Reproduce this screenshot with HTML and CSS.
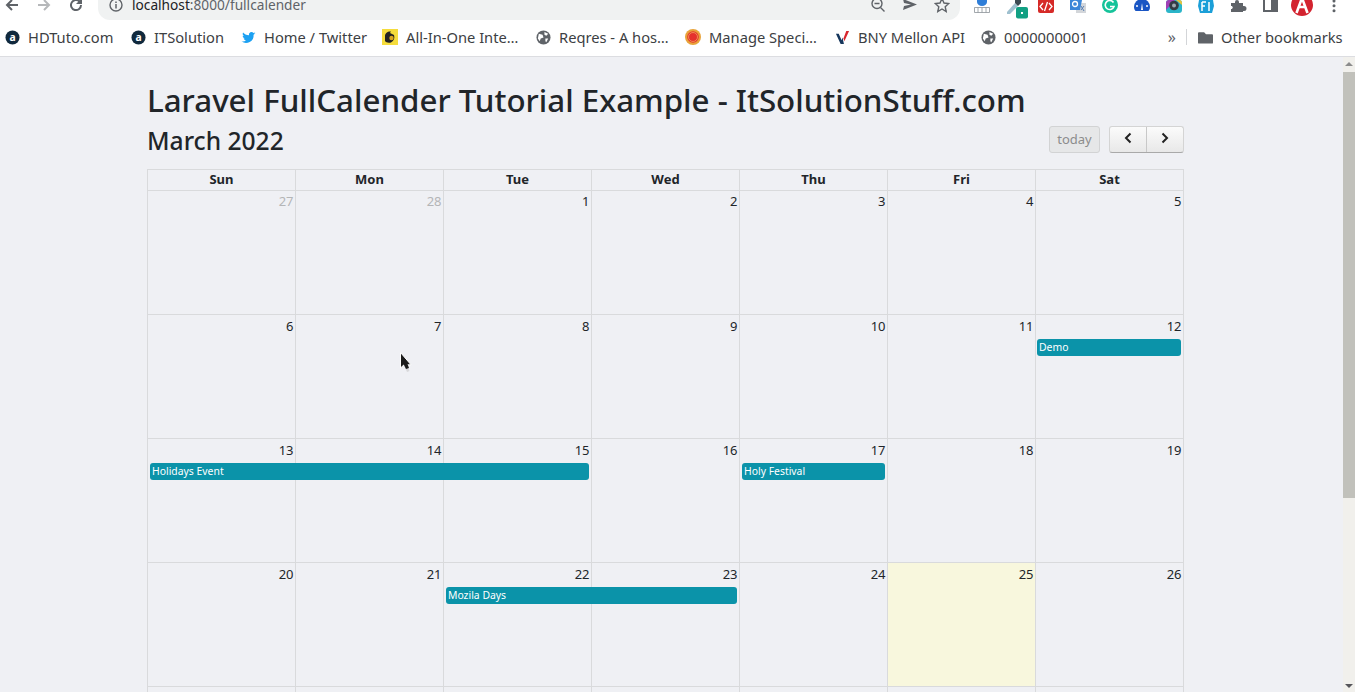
FILE: index.html
```html
<!DOCTYPE html>
<html lang="en">
<head>
    <meta charset="UTF-8">
    <meta name="viewport" content="width=device-width, initial-scale=1.0">
    <title>Laravel FullCalender Tutorial Example</title>
    <link rel="stylesheet" href="styles.css">
</head>
<body>
    <!-- Browser toolbar -->
    <header class="browser">
        <div class="toolbar">
            <div class="nav-icons">
                <svg class="nav-icon" viewBox="0 0 16 16"><path d="M14 8H3M8 3 3 8l5 5" fill="none" stroke="#5f6368" stroke-width="2"/></svg>
                <svg class="nav-icon" viewBox="0 0 16 16"><path d="M2 8h11M8 3l5 5-5 5" fill="none" stroke="#b6b8ba" stroke-width="2"/></svg>
                <svg class="nav-icon" viewBox="0 0 16 16"><path d="M13 8a5 5 0 1 1-1.500-3.500" fill="none" stroke="#5f6368" stroke-width="2"/><path d="M14 1v6H8z" fill="#5f6368"/></svg>
            </div>
            <div class="address">
                <svg class="info-icon" viewBox="0 0 14 14"><circle cx="7" cy="7" r="6" fill="none" stroke="#5f6368" stroke-width="1.400"/><path d="M7 6v4.500M7 3.500v1.400" stroke="#5f6368" stroke-width="1.500"/></svg>
                <span class="url">localhost<span class="url-path">:8000/fullcalender</span></span>
                <div class="address-icons">
                    <svg class="addr-icon" viewBox="0 0 16 16"><circle cx="7" cy="6.500" r="5" fill="none" stroke="#5f6368" stroke-width="1.400"/><path d="M4.500 6.500h5M10.500 10.500l4 4" stroke="#5f6368" stroke-width="1.400"/></svg>
                    <svg class="addr-icon" viewBox="0 0 16 16"><path d="M1 2l14 5.500L1 13l1-4 7-1.500L2 6z" fill="#5f6368"/></svg>
                    <svg class="addr-icon" viewBox="0 0 16 16"><path d="M8 1.500l2 4.500 4.800.5-3.600 3.200 1 4.800L8 12l-4.200 2.500 1-4.800L1.200 6.500 6 6z" fill="none" stroke="#5f6368" stroke-width="1.400"/></svg>
                </div>
            </div>
            <div class="extensions">
                <svg class="ext" viewBox="0 0 16 16"><path d="M3 0h10v2a5 4 0 0 1-10 0z" fill="#2f7ed8"/><path d="M.500 7.500h15v5H.500zM4 7.500v5M8 7.500v5M12 7.500v5" fill="none" stroke="#8b9298" stroke-width=".8"/></svg>
                <svg class="ext" viewBox="0 0 16 16"><path d="M1 12 9 3l3 3-8 8H1z" fill="#9fc0cf"/><path d="M9 0h6v3l-3 3-3-3z" fill="#3c4a52"/><rect x="10" y="7" width="12" height="11.500" rx="2" fill="#12a083"/><rect x="15" y="12" width="2" height="2" fill="#fff"/></svg>
                <svg class="ext" viewBox="0 0 16 16"><path d="M0 0h16v11a2 2 0 0 1-2 2H2a2 2 0 0 1-2-2z" fill="#d62a27"/><path d="M5 3 2 6.500 5 10M11 3l3 3.500L11 10M9.500 2 6.500 11" fill="none" stroke="#fff" stroke-width="1.300"/></svg>
                <svg class="ext" viewBox="0 0 16 16"><path d="M0 0h10v10H0z" fill="#3b86d8"/><path d="M6 3h10v10H6z" fill="#d3d6da"/><path d="M6 0h6l-2 10H6z" fill="#3b86d8"/><circle cx="5" cy="4" r="2.500" fill="none" stroke="#fff" stroke-width="1.300"/><path d="M11 6l3 5M14 6l-3 4" stroke="#5a7fb0"/></svg>
                <svg class="ext" viewBox="0 0 16 16"><circle cx="8" cy="5" r="8" fill="#15c39a"/><path d="M11.500 2.500a4.500 4.500 0 1 0 .5 4H8" fill="none" stroke="#fff" stroke-width="1.600"/></svg>
                <svg class="ext" viewBox="0 0 16 16"><path d="M0 7a8 8 0 0 1 16 0c0 2-1 4-2 4H2C1 11 0 9 0 7z" fill="#1a56c4"/><path d="M8 3l-1 7h2z" fill="#fff"/><circle cx="3" cy="6" r="1" fill="#fff"/><circle cx="13" cy="6" r="1" fill="#fff"/></svg>
                <svg class="ext" viewBox="0 0 16 16"><rect width="16" height="13" rx="3" fill="#2bb5c9"/><path d="M0 3a3 3 0 0 1 3-3h6L0 10z" fill="#a13fb5"/><path d="M10 0h3a3 3 0 0 1 3 3v2z" fill="#e8c33a"/><circle cx="8" cy="5.500" r="4.800" fill="#333c44"/><circle cx="8" cy="5.500" r="2" fill="#9ea8b0"/></svg>
                <svg class="ext" viewBox="0 0 16 16"><path d="M1 0h14l1 6-2 7H2L0 6z" fill="#1b9fd8"/><path d="M4 2h4M4 2v9M4 6h3M11 2v9" stroke="#fff" stroke-width="1.500" fill="none"/></svg>
                <svg class="ext" viewBox="0 0 16 16"><path d="M1 3h4V2a2 2 0 0 1 4 0v1h4v3h1a2.500 2.500 0 0 1 0 5h-1v1H1V9h1a2 2 0 0 0 0-3H1z" fill="#5f6368"/></svg>
                <svg class="ext" viewBox="0 0 16 16"><path d="M2 0v11h13V0" fill="none" stroke="#5f6368" stroke-width="2"/><path d="M9 0h6v11H9z" fill="#5f6368"/></svg>
                <svg class="ext" viewBox="0 0 16 16"><circle cx="8" cy="5" r="11" fill="#d3232f"/><path d="M2.500 13 8 -2l5.500 15M5 7h6" fill="none" stroke="#fff" stroke-width="2.600"/></svg>
                <svg class="ext" viewBox="0 0 16 16"><circle cx="8" cy="1" r="1.500" fill="#5f6368"/><circle cx="8" cy="5.700" r="1.500" fill="#5f6368"/><circle cx="8" cy="10.700" r="1.500" fill="#5f6368"/></svg>
            </div>
        </div>

        <!-- Bookmarks -->
        <nav class="bookmarks">
            <a class="bookmark bm-hd"><svg class="bm-icon" viewBox="0 0 16 16"><circle cx="8" cy="8" r="7.500" fill="#10293d"/><text x="8" y="11.500" class="bm-letter">a</text></svg>HDTuto.com</a>
            <a class="bookmark bm-it"><svg class="bm-icon" viewBox="0 0 16 16"><circle cx="8" cy="8" r="7.500" fill="#10293d"/><text x="8" y="11.500" class="bm-letter">a</text></svg>ITSolution</a>
            <a class="bookmark bm-tw"><svg class="bm-icon" viewBox="0 0 16 16"><path d="M15.500 3.500c-.5.300-1 .4-1.600.5.600-.4 1-.9 1.200-1.600-.5.300-1.100.6-1.800.7a2.800 2.800 0 0 0-4.800 2.500C5.700 5.500 3.600 4.400 2.200 2.700c-.8 1.300-.4 2.900.9 3.800-.5 0-.9-.1-1.300-.3 0 1.400 1 2.500 2.300 2.800-.4.100-.8.100-1.300 0 .4 1.100 1.400 1.900 2.700 1.900A5.700 5.700 0 0 1 .5 12.100 8 8 0 0 0 13.400 5c.6-.4 1.500-.9 2.100-1.500z" fill="#1da1f2"/></svg>Home / Twitter</a>
            <a class="bookmark bm-all"><svg class="bm-icon" viewBox="0 0 16 16"><rect width="16" height="16" fill="#f5dc3c"/><path d="M3 12V7c0-3 3-5 6-4.500L8 4l4 2c1 3 0 6-3 7.500C6 14 4 13.500 3 12z" fill="#222"/><circle cx="9.500" cy="9" r="2.200" fill="#d9a520"/></svg>All-In-One Inte…</a>
            <a class="bookmark bm-req"><svg class="bm-icon" viewBox="0 0 16 16"><circle cx="8" cy="8" r="7.500" fill="#5f6368"/><path d="M3 4l4 1 1 3-3 1-1 3-2-3zM9 2l4 2-2 2-2-1zM10 9h3l-2 4-1-1z" fill="#fff"/></svg>Reqres - A hos…</a>
            <a class="bookmark bm-man"><svg class="bm-icon" viewBox="0 0 16 16"><circle cx="8" cy="8" r="8" fill="#e8a33a"/><circle cx="8" cy="8" r="5.800" fill="#e5322d"/><circle cx="8" cy="8" r="4.500" fill="none" stroke="#f5c46a" stroke-width=".6"/></svg>Manage Speci…</a>
            <a class="bookmark bm-bny"><svg class="bm-icon" viewBox="0 0 16 16"><path d="M1 4h3l3 7 1-3 1.500 7H6z" fill="#16365c"/><path d="M9 9l3-8h3l-5 11z" fill="#d8262e"/></svg>BNY Mellon API</a>
            <a class="bookmark bm-num"><svg class="bm-icon" viewBox="0 0 16 16"><circle cx="8" cy="8" r="7.500" fill="#5f6368"/><path d="M3 4l4 1 1 3-3 1-1 3-2-3zM9 2l4 2-2 2-2-1zM10 9h3l-2 4-1-1z" fill="#fff"/></svg>0000000001</a>
            <div class="bookmarks-end">
                <span class="more">»</span>
                <span class="divider"></span>
                <a class="bookmark bm-other"><svg class="bm-icon" viewBox="0 0 16 16"><path d="M1 2.500h5.500l2 2H15a1 1 0 0 1 1 1v8a1 1 0 0 1-1 1H1a1 1 0 0 1-1-1v-10a1 1 0 0 1 1-1z" fill="#5f6368"/></svg>Other bookmarks</a>
            </div>
        </nav>
    </header>

    <div class="viewport">
        <main class="page">
            <h1>Laravel FullCalender Tutorial Example - ItSolutionStuff.com</h1>

            <div class="cal-toolbar">
                <h2>March 2022</h2>
                <div class="cal-buttons">
                    <button class="btn-today">today</button>
                    <div class="btn-group">
                        <button class="btn-arrow"><svg viewBox="0 0 10 12"><path d="M7.500 1.500 3 6l4.500 4.500" fill="none" stroke="#222" stroke-width="2"/></svg></button>
                        <button class="btn-arrow"><svg viewBox="0 0 10 12"><path d="M2.500 1.500 7 6l-4.500 4.500" fill="none" stroke="#222" stroke-width="2"/></svg></button>
                    </div>
                </div>
            </div>

            <section class="calendar">
                <div class="head-row">
                    <div class="head-cell">Sun</div>
                    <div class="head-cell">Mon</div>
                    <div class="head-cell">Tue</div>
                    <div class="head-cell">Wed</div>
                    <div class="head-cell">Thu</div>
                    <div class="head-cell">Fri</div>
                    <div class="head-cell">Sat</div>
                </div>

                <div class="week">
                    <div class="day muted">27</div>
                    <div class="day muted">28</div>
                    <div class="day">1</div>
                    <div class="day">2</div>
                    <div class="day">3</div>
                    <div class="day">4</div>
                    <div class="day">5</div>
                </div>

                <div class="week">
                    <div class="day">6</div>
                    <div class="day">7</div>
                    <div class="day">8</div>
                    <div class="day">9</div>
                    <div class="day">10</div>
                    <div class="day">11</div>
                    <div class="day">12</div>
                    <div class="event col-7 span-1">Demo</div>
                </div>

                <div class="week">
                    <div class="day">13</div>
                    <div class="day">14</div>
                    <div class="day">15</div>
                    <div class="day">16</div>
                    <div class="day">17</div>
                    <div class="day">18</div>
                    <div class="day">19</div>
                    <div class="event col-1 span-3">Holidays Event</div>
                    <div class="event col-5 span-1">Holy Festival</div>
                </div>

                <div class="week">
                    <div class="day">20</div>
                    <div class="day">21</div>
                    <div class="day">22</div>
                    <div class="day">23</div>
                    <div class="day">24</div>
                    <div class="day today">25</div>
                    <div class="day">26</div>
                    <div class="event col-3 span-2">Mozila Days</div>
                </div>

                <div class="week">
                    <div class="day"></div>
                    <div class="day"></div>
                    <div class="day"></div>
                    <div class="day"></div>
                    <div class="day"></div>
                    <div class="day"></div>
                    <div class="day"></div>
                </div>
            </section>
        </main>

        <div class="scrollbar">
            <span class="arrow-up"></span>
            <span class="thumb"></span>
            <span class="arrow-down"></span>
        </div>

        <!-- Mouse pointer -->
        <svg class="pointer" viewBox="0 0 14 22"><path d="M8 13l2.500 6-2.500 1-2.500-6z" fill="#d8d8da"/><path d="M1.500 .5v15.500l3.500-3.200H12z" fill="#1c1c1c" stroke="#fff" stroke-width="1"/><path d="M4.500 12l4 0 1.500 4-3 1z" fill="#1c1c1c"/></svg>
    </div>
</body>
</html>
```

FILE: styles.css
```css
/* General Styles */
html, body {
    height: 100%;
}

body {
    margin: 0;
    display: flex;
    flex-direction: column;
    overflow: hidden;
    font-family: "Noto Sans", sans-serif;
    background-color: #eff0f4;
    color: #212529;
}

/* Browser toolbar */
.browser {
    flex: none;
    height: 56px;
    background: #fff;
    border-bottom: 1px solid #dcdde1;
    box-sizing: content-box;
}

.toolbar {
    height: 20px;
    display: flex;
    overflow: hidden;
}

.nav-icons {
    width: 98px;
    display: flex;
    gap: 16px;
    padding-left: 4px;
    box-sizing: border-box;
    align-items: flex-start;
}

.nav-icon {
    width: 16px;
    height: 16px;
    margin-top: -3px;
}

.address {
    width: 862px;
    height: 20px;
    background: #f0f2f2;
    border-radius: 0 0 12px 12px;
    display: flex;
    align-items: flex-start;
    padding: 0 10px 0 11px;
    box-sizing: border-box;
}

.info-icon {
    width: 14px;
    height: 14px;
    margin-top: -2px;
}

.url {
    margin-left: 9px;
    font-size: 13.7px;
    line-height: 14px;
    margin-top: -2px;
    color: #202124;
}

.url-path {
    color: #5f6368;
}

.address-icons {
    margin-left: auto;
    display: flex;
    gap: 16px;
}

.addr-icon {
    width: 16px;
    height: 16px;
    margin-top: -3px;
}

.extensions {
    flex: 1;
    display: flex;
    gap: 16px;
    padding-left: 14px;
    align-items: flex-start;
}

.ext {
    width: 16px;
    height: 16px;
    flex: none;
    overflow: visible;
}

.bookmarks {
    height: 36px;
    display: flex;
    align-items: center;
    padding-left: 5px;
    padding-bottom: 2px;
    box-sizing: border-box;
    font-size: 14.7px;
    color: #3c4043;
}

.bookmark {
    display: flex;
    align-items: center;
    gap: 8px;
    white-space: nowrap;
}

.bm-icon {
    width: 15px;
    height: 15px;
    flex: none;
}

.bm-letter {
    font-family: "Noto Sans", sans-serif;
    font-size: 11px;
    font-weight: bold;
    fill: #fff;
    text-anchor: middle;
}

.bm-hd { width: 126px; }
.bm-it { width: 110px; }
.bm-tw { width: 141px; }
.bm-all { width: 154px; }
.bm-req { width: 149px; }
.bm-man { width: 150px; }
.bm-bny { width: 146px; }
.bm-num { width: 120px; }

.bm-all .bm-icon,
.bm-man .bm-icon {
    width: 16px;
    height: 16px;
}

.bookmarks-end {
    margin-left: auto;
    display: flex;
    align-items: center;
}

.more {
    font-size: 16px;
    margin-right: 10px;
    color: #5f6368;
}

.divider {
    width: 1px;
    height: 16px;
    background: #d3d5d8;
    margin-right: 11px;
}

.bm-other {
    width: 157px;
}

/* Page */
.viewport {
    flex: 1;
    min-height: 0;
    display: flex;
    position: relative;
}

.page {
    flex: 1;
    padding: 25px 159px 0 147px;
    overflow: hidden;
}

h1 {
    margin: 0;
    font-size: 31.3px;
    line-height: 37px;
    font-weight: 500;
    white-space: nowrap;
}

h2 {
    margin: 1px 0 0;
    font-size: 24.6px;
    line-height: 30px;
    font-weight: 500;
}

/* Calendar toolbar */
.cal-toolbar {
    display: flex;
    justify-content: space-between;
    align-items: flex-start;
    margin: 6px 0 7px;
    height: 37px;
}

.cal-buttons {
    display: flex;
    gap: 9px;
    margin-top: 1px;
}

.btn-today {
    width: 51px;
    height: 27px;
    padding: 0 0 2px;
    font: 13px "Noto Sans", sans-serif;
    color: #8c8c8c;
    background: #e6e7e8;
    border: 1px solid #d2d3d4;
    border-radius: 3px;
}

.btn-group {
    display: flex;
    border: 1px solid #d4d4d4;
    border-bottom-color: #a9a9a9;
    border-radius: 3px;
    background: linear-gradient(#fbfbfb, #e8e8e8);
}

.btn-arrow {
    width: 37px;
    height: 25px;
    padding: 0;
    border: none;
    background: none;
    display: flex;
    align-items: center;
    justify-content: center;
}

.btn-arrow:first-child {
    width: 36px;
}

.btn-arrow + .btn-arrow {
    border-left: 1px solid #c8c8c8;
}

.btn-arrow svg {
    width: 10px;
    height: 12px;
    margin-bottom: 3px;
}

/* Calendar grid */
.calendar {
    width: 1037px;
    border-left: 1px solid #d9dadc;
    border-top: 1px solid #d9dadc;
    box-sizing: border-box;
}

.head-row,
.week {
    display: grid;
    grid-template-columns: repeat(7, 148px);
}

.head-cell {
    height: 20px;
    line-height: 18px;
    text-align: center;
    font-size: 13px;
    font-weight: bold;
    border-right: 1px solid #d9dadc;
    border-bottom: 1px solid #d9dadc;
}

.week {
    height: 124px;
    grid-template-rows: 24px 1fr;
    box-sizing: border-box;
}

.day {
    grid-row: 1 / 3;
    border-right: 1px solid #d9dadc;
    border-bottom: 1px solid #d9dadc;
    text-align: right;
    font-size: 13px;
    line-height: 18px;
    padding: 1px 1.5px 0 0;
}

.week + .week .day {
    padding-top: 2px;
}

.day:nth-child(1) { grid-column: 1; }
.day:nth-child(2) { grid-column: 2; }
.day:nth-child(3) { grid-column: 3; }
.day:nth-child(4) { grid-column: 4; }
.day:nth-child(5) { grid-column: 5; }
.day:nth-child(6) { grid-column: 6; }
.day:nth-child(7) { grid-column: 7; }

.muted {
    color: #b4b5b7;
}

.today {
    background: #f8f7dd;
}

/* Events */
.event {
    grid-row: 2;
    align-self: start;
    height: 17px;
    line-height: 16px;
    margin: 0 3px 0 2px;
    padding-left: 2px;
    font-size: 10.4px;
    color: #fff;
    background: #0b93a9;
    border-radius: 3px;
    white-space: nowrap;
    overflow: hidden;
}

.col-1 { grid-column-start: 1; }
.col-3 { grid-column-start: 3; }
.col-5 { grid-column-start: 5; }
.col-7 { grid-column-start: 7; margin-left: 1px; }
.span-1 { grid-column-end: span 1; }
.span-2 { grid-column-end: span 2; }
.span-3 { grid-column-end: span 3; }

/* Scrollbar */
.scrollbar {
    flex: none;
    width: 12px;
    background: #f1f0ec;
    display: flex;
    flex-direction: column;
    align-items: stretch;
}

.thumb {
    height: 426px;
    background: #c1c1bb;
    margin-top: 6px;
}

.arrow-up,
.arrow-down {
    width: 0;
    height: 0;
    align-self: center;
    border-left: 4px solid transparent;
    border-right: 4px solid transparent;
}

.arrow-up {
    margin-top: 5px;
    border-bottom: 4px solid #8c8c8c;
}

.arrow-down {
    margin-top: auto;
    margin-bottom: 4px;
    border-top: 4px solid #55555a;
}

/* Mouse pointer */
.pointer {
    position: absolute;
    left: 399px;
    top: 295px;
    width: 14px;
    height: 22px;
}
```
